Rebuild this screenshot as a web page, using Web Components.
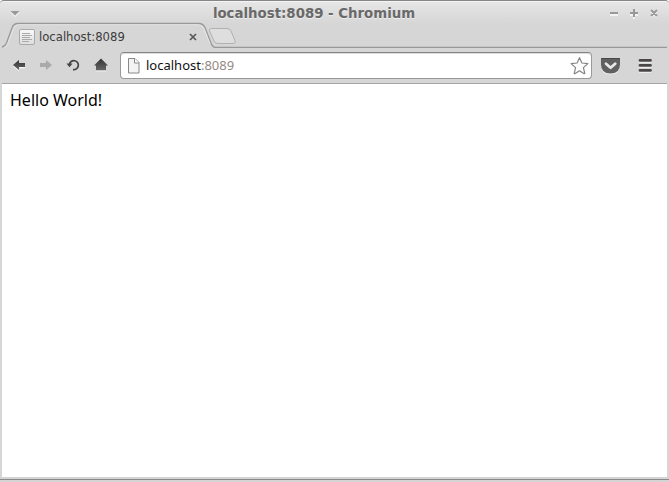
<!DOCTYPE html>
<html lang="en"><head><meta charset="utf-8"><title>localhost:8089 - Chromium</title>
<style>html,body{margin:0;height:100%;overflow:hidden;background:#fff}</style></head>
<body>
<browser-window>
  <title-bar slot="title">localhost:8089 - Chromium</title-bar>
  <tab-strip slot="tabs">localhost:8089</tab-strip>
  <tool-bar slot="tools"><address-bar><span>localhost</span><span slot="port">:8089</span></address-bar></tool-bar>
  <page-view>Hello World!</page-view>
</browser-window>
<script>
const define = (name, html) => customElements.define(name, class extends HTMLElement {
  constructor() { super(); this.attachShadow({mode:'open'}).innerHTML = html; }
});
define('browser-window', `<style>
:host{display:flex;flex-direction:column;box-sizing:border-box;width:669px;height:482px;background:linear-gradient(#e5e5e5 2px,#d6d6d6 23px,#d6d6d6);border-top:1px solid #87858a;border-radius:4px 4px 0 0;box-shadow:inset 0 1px #f5f5f5;overflow:hidden}
.main{flex:1;display:flex;margin:0 2px;background:#fff}
.foot{height:5px;box-sizing:border-box;border-top:2px solid #d3d4d3;background:linear-gradient(#8a8b89 1px,#d3d4d3 1px)}
</style><slot name="title"></slot><slot name="tabs"></slot><slot name="tools"></slot><div class="main"><slot></slot></div><div class="foot"></div>`);
define('title-bar', `<style>
:host{display:grid;grid-template-columns:100px 1fr 100px;height:21px;flex:none;font:bold 13.330px/26px "DejaVu Sans",sans-serif;color:#696969;text-shadow:0 1px #eee}
.t{text-align:center;white-space:nowrap;padding-right:41px}svg{display:block}
</style><svg width="100" height="23"><path d="M10.500 11.500h9L15 16z" fill="#f4f4f4"/><path d="M10.500 10h9l-4.500 4.500z" fill="#999"/></svg><div class="t"><slot></slot></div>
<svg width="100" height="23" fill="none" stroke-width="2"><path d="M41 14h8M61 14h8M65 10v8M82 10l6 6M88 10l-6 6" stroke="#f3f3f3"/><path stroke="#999" d="M41 12h8M61 12h8M65 8v8M82 9l6 6M88 9l-6 6"/></svg>`);
define('tab-strip', `<style>
:host{display:flex;position:relative;height:26px;flex:none;align-items:center;font:11.650px/14px "DejaVu Sans",sans-serif;color:#3c3c3c}
.bg{position:absolute;left:0;top:0}.fav{margin:4px 3px 0 19px}.label{width:147px;padding-top:3px;white-space:nowrap}.x{margin-top:4px}.fav,.label,.x{position:relative;flex:none}
</style><svg class="bg" width="669" height="26" fill="none">
<path d="M2 25.500Q5 25 6 22L12 6Q13 2.500 17 2.500H199Q203 2.500 205 6L211 22Q212 25.500 216 25.500H669V26H2z" fill="#d6d6d6"/>
<path d="M2 25Q5 24.500 6.500 21L12 6Q13.500 1.500 18 1.500H199Q203 1.500 205 5.500L211 21Q212.500 25.500 216 25.500H667" stroke="#999" stroke-width="1.300"/>
<path d="M3.500 26Q6.500 25 8 21L13.500 6.500Q15 2.700 19 2.700H198Q202 2.700 204 6.500L210 22" stroke="#e8e8e8" stroke-width=".8"/>
<path d="M211.500 6.500H227Q230 6.500 231 9L235 18.500Q236 21.500 233 21.500H218Q215 21.500 214 19L209.500 9Q208.700 6.500 211.500 6.500z" fill="#dedede" stroke="#b0b0b0"/></svg>
<svg class="fav" width="17" height="17"><defs><linearGradient id="g" x2="0" y2="1"><stop stop-color="#fafafa"/><stop offset="1" stop-color="#ddd"/></linearGradient></defs><rect x=".5" y=".5" width="15" height="15" rx="1.500" fill="url(#g)" stroke="#aaa"/><path d="M3 4.500h8M3 6.500h10M3 8.500h8M3 10.500h10M3 12.500h7" stroke="#aaa"/></svg>
<span class="label"><slot></slot></span><svg class="x" width="14" height="14"><path d="M4 4l6 6M10 4l-6 6" stroke="#585858" stroke-width="1.700"/></svg>`);
define('tool-bar', `<style>
:host{display:flex;box-sizing:border-box;height:36px;flex:none;margin:0 2px;padding-top:4px;border-bottom:1px solid #a5a5a5}
.nav,.act{flex:none;display:block}
</style><svg class="nav" width="118" height="28"><defs><linearGradient id="d" x2="0" y2="1"><stop stop-color="#333"/><stop offset="1" stop-color="#666"/></linearGradient></defs>
<path d="M11 13.500l6-5v3h6v4h-6v3z" fill="#f0f0f0" transform="translate(0 1)"/><path d="M11 13l6-5v3h6v4h-6v3z" fill="url(#d)"/>
<path d="M50 13l-6-5v3h-6v4h6v3z" fill="#aaa"/>
<path d="M67.400 12.500a4.500 4.500 0 1 1 3.600 5.100" fill="none" stroke="#444" stroke-width="1.700"/><path d="M64.500 11.500h6l-3 3.800z" fill="#444"/>
<path d="M92 13.500l7-7 7 7h-2v5H94v-5z" fill="url(#d)"/><path d="M94 19h10" stroke="#f0f0f0"/></svg>
<slot></slot><svg class="act" width="75" height="28"><path d="M9 7.300h19v6.200q0 9-9.500 9t-9.500-9z" fill="#f1f1f1"/><path d="M9 6h19v6.500q0 9-9.500 9t-9.500-9z" fill="#606060"/><path d="M9 6.500h19" stroke="#484848"/><path d="M14 11.700l4.600 4 4.600-4" fill="none" stroke="#e8e8e8" stroke-width="2.800" stroke-linecap="round" stroke-linejoin="round"/><path d="M48 9.500h10.500M48 14.500h10.500M48 19.500h10.500" stroke="#f4f4f4" stroke-width="2.600" stroke-linecap="round"/><path d="M48 8.400h10.500M48 13.400h10.500M48 18.400h10.500" stroke="#4a4648" stroke-width="2.800" stroke-linecap="round"/></svg>`);
define('address-bar', `<style>
:host{display:flex;flex:none;box-sizing:border-box;width:472px;height:27px;border:1px solid #999;border-top-color:#858585;border-radius:4px;background:#fff;box-shadow:inset 0 1px #ddd;font:13px/25px "Noto Sans",sans-serif;color:#111}
.url{flex:1;white-space:nowrap}.port{color:#968a84}svg{flex:none}
</style><svg width="25" height="25"><path d="M7.500 5.500h6.500l4 4v10.500h-10.500z" fill="#f3f3f3" stroke="#888"/><path d="M13.500 5.500v4.500h4.500" fill="#fff" stroke="#888"/></svg><span class="url"><slot></slot><span class="port"><slot name="port"></slot></span></span>
<svg width="22" height="25"><path d="M10.500 4.700l2.400 5.300 6 .6-4.500 4 1.400 5.800q-.2.600-1 .2l-4.300-2.800-4.300 2.800q-.8.400-1-.2l1.400-5.800-4.500-4 6-.6z" fill="#fff" stroke="#858585" stroke-width="1.200" stroke-linejoin="round"/></svg>`);
define('page-view', `<style>:host{display:block;flex:1;padding:5px 8px;font:16px/22px "Noto Sans",sans-serif;color:#000}</style><slot></slot>`);
</script></body></html>
